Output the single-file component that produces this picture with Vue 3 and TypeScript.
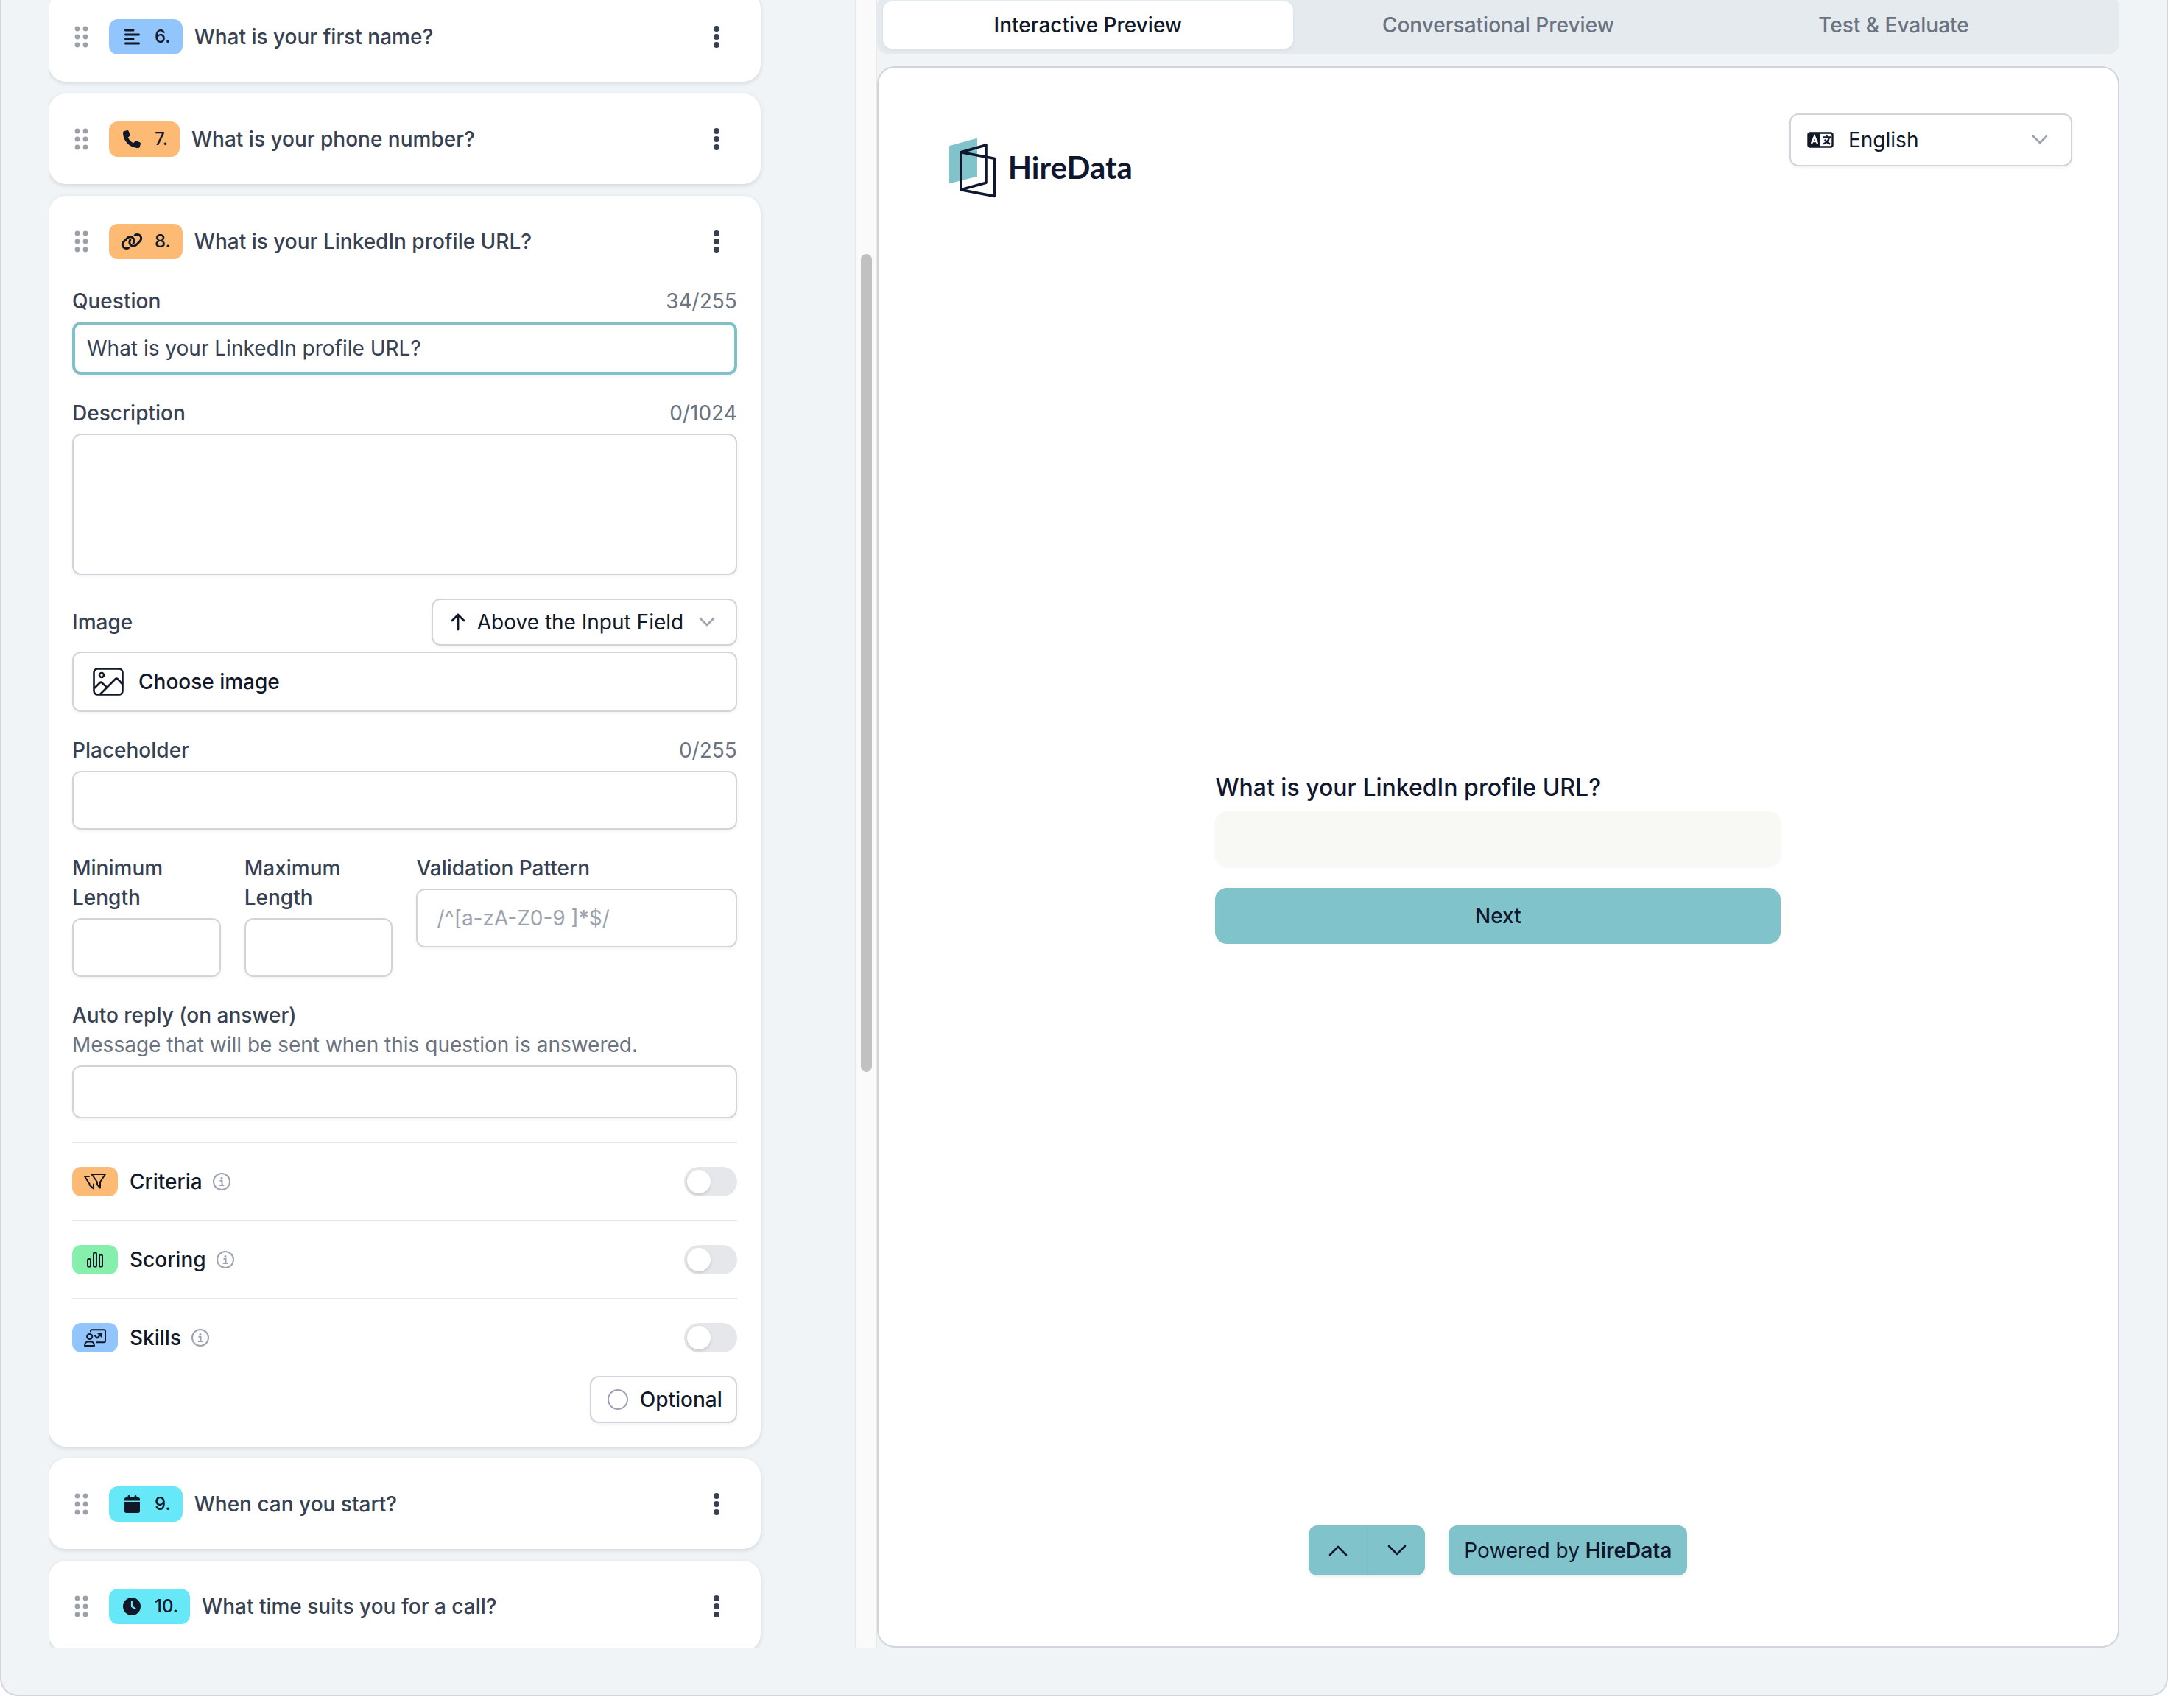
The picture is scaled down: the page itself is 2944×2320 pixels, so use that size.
<script setup lang="ts">
import { computed, ref } from 'vue'

interface Glyph {
  box: string
  width: number
  path: string
}

interface QuestionItem {
  number: number
  title: string
  tone: 'blue' | 'orange' | 'cyan'
  icon: string
  open?: boolean
}

interface FeatureRow {
  id: string
  label: string
  tone: 'orange' | 'green' | 'blue'
}

const glyphs: Record<string, Glyph> = {
  text: {
    box: '0 0 448 512',
    width: 21,
    path: 'M288 64c0 17.7-14.3 32-32 32L32 96C14.3 96 0 81.7 0 64S14.3 32 32 32l224 0c17.7 0 32 14.3 32 32zm0 256c0 17.7-14.3 32-32 32L32 352c-17.7 0-32-14.3-32-32s14.3-32 32-32l224 0c17.7 0 32 14.3 32 32zM0 192c0-17.7 14.3-32 32-32l384 0c17.7 0 32 14.3 32 32s-14.3 32-32 32L32 224c-17.7 0-32-14.3-32-32zM448 448c0 17.7-14.3 32-32 32L32 480c-17.7 0-32-14.3-32-32s14.3-32 32-32l384 0c17.7 0 32 14.3 32 32z',
  },
  phone: {
    box: '0 0 512 512',
    width: 24,
    path: 'M164.9 24.6c-7.7-18.6-28-28.5-47.4-23.2l-88 24C12.1 30.2 0 46 0 64C0 311.4 200.6 512 448 512c18 0 33.8-12.1 38.6-29.5l24-88c5.3-19.4-4.6-39.7-23.2-47.4l-96-40c-16.3-6.8-35.2-2.1-46.3 11.6L304.7 368C234.3 334.7 177.3 277.7 144 207.3L193.3 167c13.7-11.2 18.4-30 11.6-46.3l-40-96z',
  },
  link: {
    box: '0 0 640 512',
    width: 30,
    path: 'M579.8 267.7c56.5-56.5 56.5-148 0-204.5c-50-50-128.8-56.5-186.3-15.4l-1.6 1.1c-14.4 10.3-17.7 30.3-7.4 44.6s30.3 17.7 44.6 7.4l1.6-1.1c32.1-22.9 76-19.3 103.8 8.6c31.5 31.5 31.5 82.5 0 114L422.3 334.8c-31.5 31.5-82.5 31.5-114 0c-27.9-27.9-31.5-71.8-8.6-103.8l1.1-1.6c10.3-14.4 6.9-34.4-7.4-44.6s-34.4-6.9-44.6 7.4l-1.1 1.6C206.5 251.2 213 330 263 380c56.5 56.5 148 56.5 204.5 0L579.8 267.7zM60.2 244.3c-56.5 56.5-56.5 148 0 204.5c50 50 128.8 56.5 186.3 15.4l1.6-1.1c14.4-10.3 17.7-30.3 7.4-44.6s-30.3-17.7-44.6-7.4l-1.6 1.1c-32.1 22.9-76 19.3-103.8-8.6C74 372 74 321 105.5 289.5L217.7 177.2c31.5-31.5 82.5-31.5 114 0c27.9 27.9 31.5 71.8 8.6 103.9l-1.1 1.6c-10.3 14.4-6.9 34.4 7.4 44.6s34.4 6.9 44.6-7.4l1.1-1.6C433.5 260.8 427 182 377 132c-56.5-56.5-148-56.5-204.5 0L60.2 244.3z',
  },
  calendar: {
    box: '0 0 448 512',
    width: 21,
    path: 'M96 32l0 32L48 64C21.5 64 0 85.5 0 112l0 48 448 0 0-48c0-26.5-21.5-48-48-48l-48 0 0-32c0-17.7-14.3-32-32-32s-32 14.3-32 32l0 32L160 64l0-32c0-17.7-14.3-32-32-32S96 14.3 96 32zM448 192L0 192 0 464c0 26.5 21.5 48 48 48l352 0c26.5 0 48-21.5 48-48l0-272z',
  },
  clock: {
    box: '0 0 512 512',
    width: 24,
    path: 'M256 0a256 256 0 1 1 0 512A256 256 0 1 1 256 0zM232 120l0 136c0 8 4 15.5 10.7 20l96 64c11 7.4 25.9 4.4 33.3-6.7s4.4-25.9-6.7-33.3L280 243.2 280 120c0-13.3-10.7-24-24-24s-24 10.7-24 24z',
  },
}

const questions: QuestionItem[] = [
  { number: 6, title: 'What is your first name?', tone: 'blue', icon: 'text' },
  { number: 7, title: 'What is your phone number?', tone: 'orange', icon: 'phone' },
  { number: 8, title: 'What is your LinkedIn profile URL?', tone: 'orange', icon: 'link', open: true },
  { number: 9, title: 'When can you start?', tone: 'cyan', icon: 'calendar' },
  { number: 10, title: 'What time suits you for a call?', tone: 'cyan', icon: 'clock' },
]

const features: FeatureRow[] = [
  { id: 'criteria', label: 'Criteria', tone: 'orange' },
  { id: 'scoring', label: 'Scoring', tone: 'green' },
  { id: 'skills', label: 'Skills', tone: 'blue' },
]

const tabs = ['Interactive Preview', 'Conversational Preview', 'Test & Evaluate']
const activeTab = ref(tabs[0])

const question = ref('What is your LinkedIn profile URL?')
const description = ref('')
const placeholder = ref('')
const questionCount = computed(() => `${question.value.length}/255`)
const descriptionCount = computed(() => `${description.value.length}/1024`)
const placeholderCount = computed(() => `${placeholder.value.length}/255`)
</script>

<template>
  <main class="frame">
    <section class="editor">
      <div class="cards">
        <article v-for="item in questions" :key="item.number" class="card">
          <header class="card-head">
            <svg class="grip" width="20" height="30" viewBox="0 0 20 30" aria-hidden="true">
              <g fill="#9ca0a8">
                <circle cx="4" cy="4" r="3.4" /><circle cx="15" cy="4" r="3.4" />
                <circle cx="4" cy="15" r="3.4" /><circle cx="15" cy="15" r="3.4" />
                <circle cx="4" cy="26" r="3.4" /><circle cx="15" cy="26" r="3.4" />
              </g>
            </svg>
            <span class="badge" :class="item.tone">
              <span class="badge-icon">
                <svg :width="glyphs[item.icon].width" height="24" :viewBox="glyphs[item.icon].box" aria-hidden="true">
                  <path fill="currentColor" :d="glyphs[item.icon].path" />
                </svg>
              </span>
              <span>{{ item.number }}.</span>
            </span>
            <h2 class="card-title">{{ item.title }}</h2>
            <button class="kebab" type="button" aria-label="Question menu">
              <svg width="10" height="32" viewBox="0 0 10 32" aria-hidden="true">
                <g fill="#374151">
                  <circle cx="5" cy="5" r="4" /><circle cx="5" cy="16" r="4" /><circle cx="5" cy="27" r="4" />
                </g>
              </svg>
            </button>
          </header>

          <form v-if="item.open" class="form" @submit.prevent>
            <div class="field">
              <div class="label-row">
                <label for="question">Question</label>
                <span class="count">{{ questionCount }}</span>
              </div>
              <input id="question" v-model="question" class="box slim focused" type="text" />
            </div>

            <div class="field">
              <div class="label-row">
                <label for="description">Description</label>
                <span class="count">{{ descriptionCount }}</span>
              </div>
              <textarea id="description" v-model="description" class="box area"></textarea>
            </div>

            <div class="field">
              <div class="label-row">
                <label for="image-position">Image</label>
                <div class="select-wrap position">
                  <svg class="lead" width="20" height="24" viewBox="0 0 20 24" fill="none" stroke="#111827" stroke-width="2.8" stroke-linecap="round" stroke-linejoin="round" aria-hidden="true">
                    <path d="M10 22V2M2 10l8-8 8 8" />
                  </svg>
                  <select id="image-position" class="box">
                    <option>Above the Input Field</option>
                  </select>
                  <svg class="chevron" width="22" height="14" viewBox="0 0 22 14" aria-hidden="true">
                    <path d="M2 2l9 9 9-9" />
                  </svg>
                </div>
              </div>
              <button class="box choose" type="button">
                <svg width="42" height="38" viewBox="0 0 42 38" fill="none" stroke="#111827" stroke-width="2.6" stroke-linejoin="round" aria-hidden="true">
                  <rect x="1.500" y="1.500" width="39" height="35" rx="5" />
                  <circle cx="12" cy="10" r="3" />
                  <path d="M2 28l7.500-7.500c1-1 2-1 3 0l7.500 7M9.500 36.500l21-21c1.200-1.200 2.300-1.200 3.500 0l6.500 7" />
                </svg>
                Choose image
              </button>
            </div>

            <div class="field">
              <div class="label-row">
                <label for="placeholder">Placeholder</label>
                <span class="count">{{ placeholderCount }}</span>
              </div>
              <input id="placeholder" v-model="placeholder" class="box" type="text" />
            </div>

            <div class="limits">
              <div class="field">
                <label for="min-length">Minimum Length</label>
                <input id="min-length" class="box" type="text" inputmode="numeric" />
              </div>
              <div class="field">
                <label for="max-length">Maximum Length</label>
                <input id="max-length" class="box" type="text" inputmode="numeric" />
              </div>
              <div class="field wide">
                <label for="pattern">Validation Pattern</label>
                <input id="pattern" class="box" type="text" placeholder="/^[a-zA-Z0-9 ]*$/" />
              </div>
            </div>

            <div class="field">
              <div>
                <label for="auto-reply">Auto reply (on answer)</label>
                <p class="hint">Message that will be sent when this question is answered.</p>
              </div>
              <input id="auto-reply" class="box slim" type="text" />
            </div>

            <div class="features">
              <div v-for="feature in features" :key="feature.id" class="feature">
                <span class="feature-badge" :class="feature.tone">
                  <svg width="30" height="24" viewBox="0 0 30 24" fill="none" stroke="#111827" stroke-width="2" stroke-linecap="round" stroke-linejoin="round" aria-hidden="true">
                    <path v-if="feature.id === 'criteria'" d="M10.500 2h18.500l-7 10.500v8l-4-4.500v-3.500zM7 5H1l6.500 10v1.500l5.500 5v-6" />
                    <g v-else-if="feature.id === 'scoring'">
                      <rect x="5" y="11" width="4" height="10.500" rx="1.600" />
                      <rect x="13" y="2.500" width="4" height="19" rx="1.600" />
                      <rect x="21" y="5.500" width="4" height="16" rx="1.600" />
                    </g>
                    <g v-else>
                      <circle cx="7.700" cy="10.500" r="3.600" />
                      <path d="M1 23c0-3.500 2-5.500 4.500-5.500h4C12 17.500 14 19.500 14 23zM9 3.500V3c0-1 .8-1.800 1.800-1.800h16.400c1 0 1.800.8 1.800 1.800v13.500c0 1-.8 1.800-1.800 1.800H17" />
                      <path d="M15 9.500l3 3 5-5M19.500 6.500h4v4" />
                    </g>
                  </svg>
                </span>
                <label class="feature-label" :for="feature.id">{{ feature.label }}</label>
                <svg width="24" height="24" viewBox="0 0 24 24" fill="none" stroke="#9ca3af" stroke-width="2" aria-hidden="true">
                  <circle cx="12" cy="12" r="11" />
                  <path d="M9.500 10.800h3v6M8.800 17h6.500" />
                  <circle cx="12" cy="7.300" r="1.400" fill="#9ca3af" stroke="none" />
                </svg>
                <input :id="feature.id" class="toggle" type="checkbox" role="switch" />
              </div>
            </div>

            <label class="optional">
              <input class="ring" type="checkbox" />
              Optional
            </label>
          </form>
        </article>
      </div>
      <div class="track" aria-hidden="true"><div class="thumb"></div></div>
    </section>

    <section class="preview">
      <nav class="tabs" role="tablist">
        <button
          v-for="tab in tabs"
          :key="tab"
          class="tab"
          :class="{ active: tab === activeTab }"
          type="button"
          role="tab"
          :aria-selected="tab === activeTab"
          @click="activeTab = tab"
        >
          {{ tab }}
        </button>
      </nav>

      <div class="stage">
        <header class="stage-head">
          <div class="brand">
            <svg width="64" height="82" viewBox="0 0 64 82" aria-hidden="true">
              <path fill="#80c3ca" stroke="#80c3ca" stroke-width="2" stroke-linejoin="round" d="M1 11L37 1v50L1 60z" />
              <g fill="none" stroke="#0f172f" stroke-width="3.600" stroke-linejoin="round">
                <path d="M15.800 18.800L50 9v51.200l-34.200 9.500z" />
                <path d="M15.800 18.800L61.300 27.200v51.200L15.800 69.700" />
              </g>
            </svg>
            <span class="brand-name">HireData</span>
          </div>
          <div class="select-wrap language">
            <svg class="lead" width="36" height="24" viewBox="0 0 36 24" aria-hidden="true">
              <rect x="1.500" y="2.500" width="33" height="19" rx="2.500" fill="#fff" stroke="#111827" stroke-width="2.400" />
              <path d="M3 2h15v20H3c-1.500 0-2-1-2-2V4c0-1 .5-2 2-2z" fill="#111827" />
              <path d="M6 17l4-10 4 10M7.500 14h5" fill="none" stroke="#fff" stroke-width="2.400" />
              <path d="M21 8.500h11M26.500 6v2.500M30 9c-1 4-4 7-8 8.500M24 11.500c1.500 3 4 5 7 6" fill="none" stroke="#111827" stroke-width="2.400" />
            </svg>
            <select class="box slim" aria-label="Language">
              <option>English</option>
            </select>
            <svg class="chevron" width="22" height="14" viewBox="0 0 22 14" aria-hidden="true">
              <path d="M2 2l9 9 9-9" />
            </svg>
          </div>
        </header>

        <form class="answer" @submit.prevent>
          <label class="answer-label" for="answer">{{ question }}</label>
          <input id="answer" class="answer-input" type="text" />
          <button class="next" type="submit">Next</button>
        </form>

        <footer class="stage-foot">
          <div class="pager">
            <button type="button" aria-label="Previous question">
              <svg width="26" height="16" viewBox="0 0 26 16" aria-hidden="true"><path d="M2 14L13 3l11 11" /></svg>
            </button>
            <button type="button" aria-label="Next question">
              <svg width="26" height="16" viewBox="0 0 26 16" aria-hidden="true"><path d="M2 2l11 11L24 2" /></svg>
            </button>
          </div>
          <a class="powered" href="#">Powered by <strong>HireData</strong></a>
        </footer>
      </div>
    </section>
  </main>
</template>

<style>
body {
  background: #fff;
}
</style>

<style scoped>
* {
  box-sizing: border-box;
}

.frame {
  display: grid;
  grid-template-columns: 2fr 3fr;
  grid-template-rows: minmax(0, 1fr);
  height: calc(100vh - 16px);
  padding: 0 64px 64px;
  overflow: hidden;
  border: 2px solid #d1d6dc;
  border-top: 0;
  border-radius: 0 0 24px 24px;
  background: #f0f4f7;
  color: #374151;
  font-family: Inter, "Liberation Sans", sans-serif;
  font-size: 28px;
  line-height: 40px;
}

button,
input,
select,
textarea {
  margin: 0;
  font: inherit;
  color: inherit;
}

button {
  cursor: pointer;
}

/* Question list */
.editor {
  display: flex;
  min-width: 0;
  overflow: hidden;
}

.cards {
  flex: 1;
  display: flex;
  flex-direction: column;
  gap: 16px;
  min-width: 0;
  margin-top: -12px;
  padding-right: 128px;
}

.card {
  flex: none;
  border-radius: 24px;
  background: #fff;
  box-shadow: 0 2px 6px rgba(0, 0, 0, 0.12);
}

.card-head {
  display: flex;
  align-items: center;
  height: 123px;
  padding: 0 55px 0 35px;
}

.grip {
  margin-right: 27px;
}

.badge {
  display: flex;
  align-items: center;
  gap: 16px;
  height: 48px;
  margin-right: 16px;
  padding: 0 16px;
  border-radius: 12px;
  color: #111827;
  font-size: 24px;
  font-weight: 500;
}

.badge-icon {
  display: flex;
  justify-content: center;
  width: 30px;
}

.blue {
  background: #93c5fd;
}

.orange {
  background: #fdba74;
}

.cyan {
  background: #67e8f9;
}

.green {
  background: #86efac;
}

.card-title {
  flex: 1;
  margin: 0;
  font-size: 28px;
  font-weight: 500;
}

.kebab {
  display: flex;
  padding: 0;
  border: 0;
  background: none;
}

/* Question form */
.form {
  display: flex;
  flex-direction: column;
  gap: 32px;
  padding: 0 32px 32px;
}

.field {
  display: flex;
  flex-direction: column;
  gap: 8px;
}

.label-row {
  display: flex;
  align-items: center;
  justify-content: space-between;
}

label {
  display: block;
  font-weight: 500;
}

.count,
.hint {
  margin: 0;
  color: #6b7280;
}

.box {
  display: block;
  width: 100%;
  height: 80px;
  padding: 0 26px;
  border: 2px solid #d1d5db;
  border-radius: 12px;
  outline: 0;
  background: #fff;
  box-shadow: 0 2px 4px rgba(0, 0, 0, 0.05);
  appearance: none;
}

.box::placeholder {
  color: #9ca3af;
  opacity: 1;
}

.box.slim {
  height: 72px;
}

.box.focused {
  padding: 0 16px;
  border: 4px solid #80c0c8;
}

.box.area {
  height: 192px;
  resize: none;
}

.select-wrap {
  position: relative;
  color: #111827;
}

.select-wrap .lead,
.select-wrap .chevron {
  position: absolute;
  top: 0;
  bottom: 0;
  margin: auto 0;
  pointer-events: none;
}

.select-wrap .lead {
  left: 24px;
}

.select-wrap .chevron {
  right: 30px;
  fill: none;
  stroke: #9ca3af;
  stroke-width: 2.6;
  stroke-linecap: round;
  stroke-linejoin: round;
}

.position {
  width: 415px;
}

.position .lead {
  left: 26px;
}

.position .box {
  height: 64px;
  padding-left: 60px;
}

.language {
  width: 384px;
}

.language .box {
  padding-left: 78px;
}

.language .chevron {
  right: 33px;
}

.box.choose {
  display: flex;
  align-items: center;
  gap: 20px;
  height: 82px;
  padding: 0 26px;
  color: #111827;
  font-weight: 500;
}

.limits {
  display: grid;
  grid-template-columns: repeat(4, 1fr);
  align-items: start;
  gap: 32px;
}

.wide {
  grid-column: span 2;
}

.feature {
  display: flex;
  align-items: center;
  gap: 14px;
  padding: 32px 0;
  border-top: 2px solid #e5e7eb;
}

.feature:last-child {
  padding-bottom: 0;
}

.feature-badge {
  display: flex;
  align-items: center;
  height: 40px;
  margin-right: 2px;
  padding: 0 16px;
  border-radius: 12px;
}

.feature-label {
  color: #111827;
}

.toggle {
  width: 72px;
  height: 40px;
  margin-left: auto;
  padding: 4px;
  border-radius: 20px;
  background: #e5e7eb;
  appearance: none;
}

.toggle::before {
  content: "";
  display: block;
  width: 32px;
  height: 32px;
  border-radius: 50%;
  background: #fff;
  box-shadow: 0 2px 4px rgba(0, 0, 0, 0.14);
}

.toggle:checked {
  background: #80c3ca;
}

.toggle:checked::before {
  margin-left: auto;
}

.optional {
  display: flex;
  align-items: center;
  align-self: flex-end;
  gap: 16px;
  height: 64px;
  padding: 0 18px 0 22px;
  border: 2px solid #d1d5db;
  border-radius: 12px;
  box-shadow: 0 2px 4px rgba(0, 0, 0, 0.05);
  color: #111827;
}

.ring {
  width: 28px;
  height: 28px;
  border: 2px solid #9ca3af;
  border-radius: 50%;
  appearance: none;
}

.ring:checked {
  background: #80c3ca;
}

/* Scroll position of the list */
.track {
  display: grid;
  grid-template-rows: 345fr 1111fr 782fr;
  width: 30px;
  padding: 0 5px 0 6px;
  border: solid #e8e8e8;
  border-width: 0 2px;
  background: #fafafa;
}

.thumb {
  grid-row: 2;
  border-radius: 8px;
  background: #c1c1c1;
}

/* Preview */
.preview {
  display: flex;
  flex-direction: column;
  gap: 16px;
  min-width: 0;
}

.tabs {
  display: grid;
  grid-template-columns: repeat(3, 1fr);
  height: 80px;
  margin-top: -6px;
  padding: 8px;
  border-radius: 16px;
  background: #e5eaee;
}

.tab {
  padding: 0;
  border: 0;
  border-radius: 12px;
  background: none;
  color: #6b7280;
  font-weight: 500;
}

.tab:last-child {
  padding-right: 40px;
}

.tab.active {
  background: #fff;
  box-shadow: 0 2px 4px rgba(0, 0, 0, 0.06);
  color: #111827;
}

.stage {
  flex: 1;
  display: grid;
  grid-template-rows: 1fr auto 1fr;
  justify-items: center;
  padding: 62px;
  border: 2px solid #d1d5db;
  border-radius: 24px;
  background: #fff;
}

.stage-head {
  display: flex;
  align-items: flex-start;
  align-self: start;
  justify-content: space-between;
  width: 100%;
}

.brand {
  display: flex;
  align-items: center;
  gap: 16px;
  padding: 34px 0 0 34px;
}

.brand-name {
  padding-bottom: 4px;
  color: #0f172f;
  font-family: Lato, "Liberation Sans", sans-serif;
  font-size: 42px;
  font-weight: 700;
}

.answer {
  display: flex;
  flex-direction: column;
  width: 768px;
}

.answer-label {
  margin-bottom: 8px;
  color: #0f172f;
  font-size: 32px;
  line-height: 48px;
}

.answer-input {
  height: 74px;
  margin-bottom: 30px;
  padding: 0 24px;
  border: 0;
  border-radius: 16px;
  outline: 0;
  background: #f8f9f4;
  box-shadow: 0 2px 4px rgba(0, 0, 0, 0.04);
}

.next {
  height: 76px;
  border: 0;
  border-radius: 16px;
  background: #80c3ca;
  color: #0f172f;
  font-weight: 500;
}

.stage-foot {
  display: flex;
  align-items: center;
  align-self: end;
  gap: 32px;
  padding-bottom: 34px;
}

.pager {
  display: flex;
  border-radius: 12px;
  background: #80c3ca;
  box-shadow: 0 2px 4px rgba(0, 0, 0, 0.08);
}

.pager button {
  display: flex;
  align-items: center;
  justify-content: center;
  width: 79px;
  height: 68px;
  padding: 0;
  border: 0;
  background: none;
}

.pager button + button {
  border-left: 2px solid #7bc0c7;
}

.pager path {
  fill: none;
  stroke: #0f172f;
  stroke-width: 2.6;
  stroke-linecap: round;
  stroke-linejoin: round;
}

.powered {
  padding: 14px 21px;
  border-radius: 12px;
  background: #80c3ca;
  box-shadow: 0 2px 4px rgba(0, 0, 0, 0.06);
  color: #0f172f;
  text-decoration: none;
}

.powered strong {
  font-weight: 600;
}
</style>
